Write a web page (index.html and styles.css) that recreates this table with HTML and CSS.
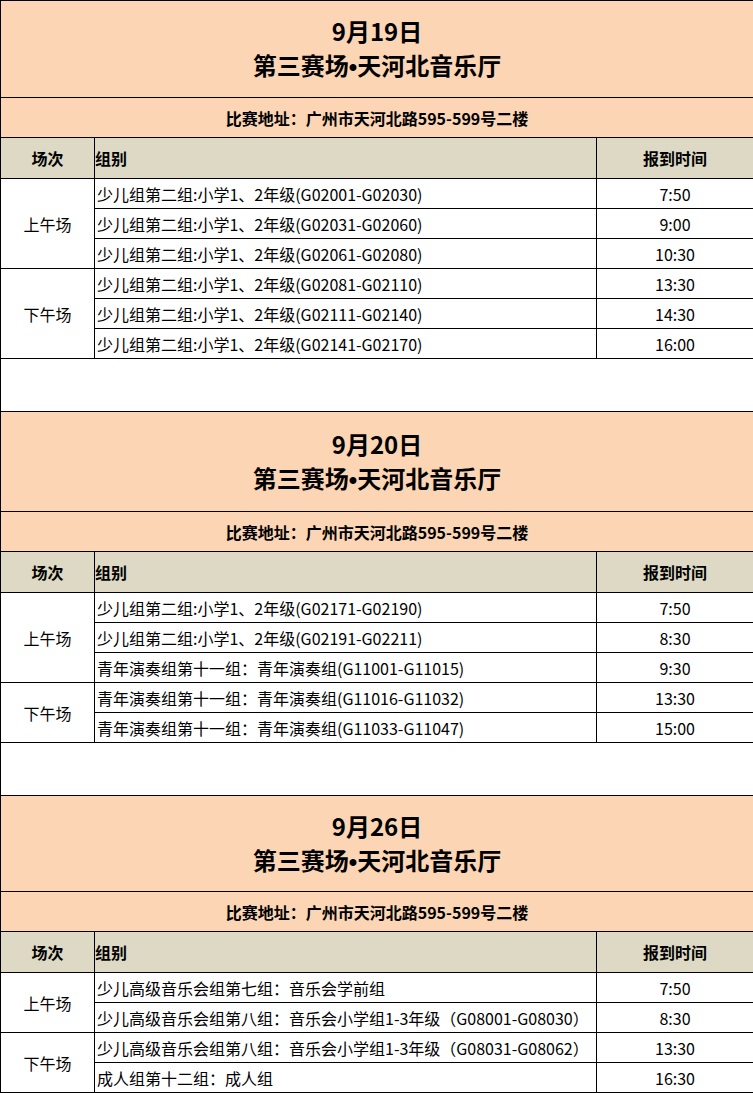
FILE: index.html
```html
<!DOCTYPE html>
<html lang="zh-CN">
<head>
<meta charset="utf-8">
<title>赛程安排</title>
<link rel="stylesheet" href="styles.css">
</head>
<body>
<table class="sheet">
  <colgroup>
    <col class="c-session">
    <col class="c-group">
    <col class="c-time">
  </colgroup>
  <tbody>
    <!-- 9月19日 -->
    <tr class="r-title r-title-1"><td colspan="3" class="title">9月19日<br>第三赛场<span class="dot">•</span>天河北音乐厅</td></tr>
    <tr class="r-addr"><td colspan="3" class="addr">比赛地址：广州市天河北路595-599号二楼</td></tr>
    <tr class="r-head"><th class="h-center">场次</th><th class="h-left">组别</th><th class="h-center">报到时间</th></tr>
    <tr class="r-data"><td rowspan="3" class="session">上午场</td><td class="group">少儿组第二组:小学1、2年级(G02001-G02030)</td><td class="time">7:50</td></tr>
    <tr class="r-data"><td class="group">少儿组第二组:小学1、2年级(G02031-G02060)</td><td class="time">9:00</td></tr>
    <tr class="r-data"><td class="group">少儿组第二组:小学1、2年级(G02061-G02080)</td><td class="time">10:30</td></tr>
    <tr class="r-data"><td rowspan="3" class="session">下午场</td><td class="group">少儿组第二组:小学1、2年级(G02081-G02110)</td><td class="time">13:30</td></tr>
    <tr class="r-data"><td class="group">少儿组第二组:小学1、2年级(G02111-G02140)</td><td class="time">14:30</td></tr>
    <tr class="r-data"><td class="group">少儿组第二组:小学1、2年级(G02141-G02170)</td><td class="time">16:00</td></tr>
    <tr class="r-gap"><td colspan="3"></td></tr>

    <!-- 9月20日 -->
    <tr class="r-title r-title-2"><td colspan="3" class="title">9月20日<br>第三赛场<span class="dot">•</span>天河北音乐厅</td></tr>
    <tr class="r-addr"><td colspan="3" class="addr">比赛地址：广州市天河北路595-599号二楼</td></tr>
    <tr class="r-head"><th class="h-center">场次</th><th class="h-left">组别</th><th class="h-center">报到时间</th></tr>
    <tr class="r-data"><td rowspan="3" class="session">上午场</td><td class="group">少儿组第二组:小学1、2年级(G02171-G02190)</td><td class="time">7:50</td></tr>
    <tr class="r-data"><td class="group">少儿组第二组:小学1、2年级(G02191-G02211)</td><td class="time">8:30</td></tr>
    <tr class="r-data"><td class="group">青年演奏组第十一组：青年演奏组(G11001-G11015)</td><td class="time">9:30</td></tr>
    <tr class="r-data"><td rowspan="2" class="session">下午场</td><td class="group">青年演奏组第十一组：青年演奏组(G11016-G11032)</td><td class="time">13:30</td></tr>
    <tr class="r-data"><td class="group">青年演奏组第十一组：青年演奏组(G11033-G11047)</td><td class="time">15:00</td></tr>
    <tr class="r-gap"><td colspan="3"></td></tr>

    <!-- 9月26日 -->
    <tr class="r-title r-title-3"><td colspan="3" class="title">9月26日<br>第三赛场<span class="dot">•</span>天河北音乐厅</td></tr>
    <tr class="r-addr"><td colspan="3" class="addr">比赛地址：广州市天河北路595-599号二楼</td></tr>
    <tr class="r-head"><th class="h-center">场次</th><th class="h-left">组别</th><th class="h-center">报到时间</th></tr>
    <tr class="r-data"><td rowspan="2" class="session">上午场</td><td class="group">少儿高级音乐会组第七组：音乐会学前组</td><td class="time">7:50</td></tr>
    <tr class="r-data"><td class="group">少儿高级音乐会组第八组：音乐会小学组1-3年级（G08001-G08030）</td><td class="time">8:30</td></tr>
    <tr class="r-data"><td rowspan="2" class="session">下午场</td><td class="group">少儿高级音乐会组第八组：音乐会小学组1-3年级（G08031-G08062）</td><td class="time">13:30</td></tr>
    <tr class="r-data"><td class="group">成人组第十二组：成人组</td><td class="time">16:30</td></tr>
  </tbody>
</table>
</body>
</html>
```

FILE: styles.css
```css
html, body {
  margin: 0;
  padding: 0;
  background: #ffffff;
}

body {
  font-family: "Noto Sans CJK SC", "Noto Sans", sans-serif;
  color: #000000;
}

.sheet {
  border-collapse: collapse;
  table-layout: fixed;
  width: 753px;
}

.c-session { width: 94px; }
.c-group { width: 502px; }
.c-time { width: 157px; }

.sheet td,
.sheet th {
  border: 1px solid #000000;
  padding: 0;
  overflow: hidden;
  white-space: nowrap;
}

.title {
  background: #fcd5b4;
  text-align: center;
  font-weight: 700;
  font-size: 24px;
  line-height: 34px;
}

.dot {
  font-family: "Liberation Sans", "DejaVu Sans", sans-serif;
  font-weight: 700;
}

.r-title-1 td { height: 96px; }
.r-title-2 td { height: 99px; }
.r-title-3 td { height: 95px; }

.addr {
  background: #fcd5b4;
  text-align: center;
  font-weight: 700;
  font-size: 16px;
  height: 39px;
}

.r-head th {
  background: #ddd9c4;
  font-weight: 700;
  font-size: 16px;
  height: 40px;
}

.h-center { text-align: center; }
.h-left { text-align: left; padding-left: 2px; }

.r-data td {
  height: 29px;
  font-size: 16px;
  font-weight: 400;
  line-height: 20px;
}

.session { text-align: center; }
.group { text-align: left; padding-left: 2px !important; }
.time { text-align: center; }

.r-gap td { height: 52px; }
```
